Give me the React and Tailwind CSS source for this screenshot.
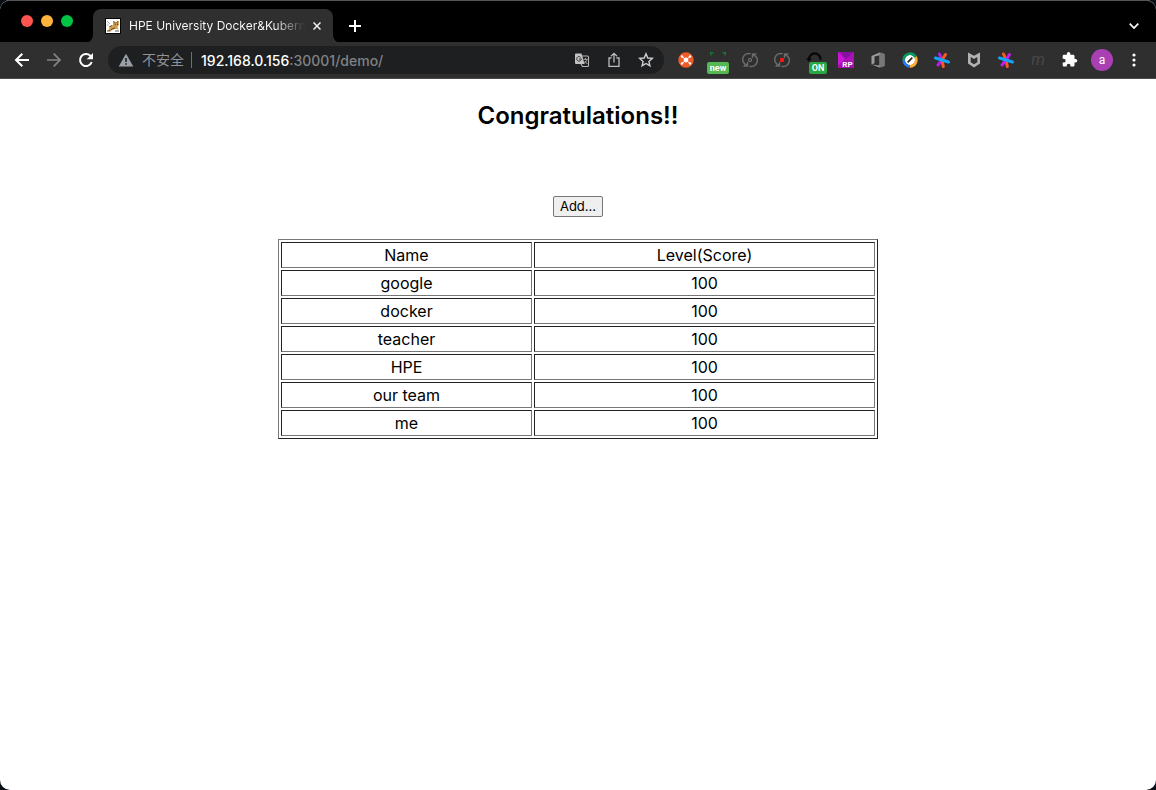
import React from "react";

const rows = [
  ["google", 100],
  ["docker", 100],
  ["teacher", 100],
  ["HPE", 100],
  ["our team", 100],
  ["me", 100],
];

const slot = "flex h-8 w-8 shrink-0 items-center justify-center";

function ToolButton({ label, children }) {
  return (
    <button type="button" aria-label={label} className={slot}>
      {children}
    </button>
  );
}

function TabCurve({ flip }) {
  return (
    <svg width="8" height="8" viewBox="0 0 8 8" className={flip ? "-scale-x-100" : ""} aria-hidden="true">
      <path d="M8 0v8H0a8 8 0 0 0 8-8z" fill="#2f2f2f" />
    </svg>
  );
}

function TomcatIcon() {
  return (
    <svg width="16" height="16" viewBox="0 0 16 16" className="shrink-0" aria-hidden="true">
      <rect width="16" height="16" fill="#050505" />
      <rect x="1" y="1" width="14" height="14" fill="#fff" />
      <path d="M2 3l3 3M1.500 7h2" stroke="#9a9a9a" strokeWidth=".8" />
      <path d="M8 3l1.300 1h2.500L13.500 2.500l.5 4.300-1.500 2 1 3-2-1-3 .5L6 13l-4-.2 2-1.600 1-2.700L8 7z" fill="#cf9d4c" />
      <path d="M4 9l3-1.500M6 11.500l4-1.500M2 13h3.500M10 13h4M8.500 3l1.500 2M13 3l-1 2" stroke="#54340d" strokeWidth=".8" />
      <path d="M9.800 6.200h.8M12 6.200h.8" stroke="#111" strokeWidth="1" />
    </svg>
  );
}

function SyncIcon({ recording }) {
  return (
    <svg width="16" height="16" viewBox="0 0 16 16" fill="none" aria-hidden="true">
      <g stroke="#6a6a6a" strokeWidth="1.500">
        <path d="M5 13.300A6 6 0 0 1 8.500 1.700M1.500 13.900h4V10" />
        <path d="M11 2.700A6 6 0 0 1 7.500 14.300M14.500 2.100h-4V6" />
      </g>
      {recording ? (
        <circle cx="8" cy="8" r="2.200" fill="#ff1717" />
      ) : (
        <circle cx="8" cy="8" r="1.500" stroke="#777" strokeWidth="1.100" />
      )}
    </svg>
  );
}

function PinwheelIcon({ swap }) {
  const a = swap ? "#ff5722" : "#b81ee8";
  const b = swap ? "#c31eea" : "#ff5722";
  return (
    <svg width="18" height="18" viewBox="0 0 18 18" strokeWidth="3" strokeLinecap="round" fill="none" aria-hidden="true">
      <path d="M6.500 3L9 9" stroke={a} />
      <path d="M9 9l1.300 6.500" stroke={a} />
      <path d="M12.500 3.500L9 9" stroke={b} />
      <path d="M9 9l-4 5" stroke={b} />
      <path d="M2.500 7l13 4" stroke="#13a5f5" />
    </svg>
  );
}

function TabStrip() {
  return (
    <div className="flex h-[42px] items-end bg-black">
      <div className="flex w-[85px] shrink-0 gap-2 self-start pt-3.5 pl-[21px]">
        <button type="button" aria-label="Close window" className="h-3 w-3 rounded-full bg-[#ff5450]" />
        <button type="button" aria-label="Minimize window" className="h-3 w-3 rounded-full bg-[#ffb33c]" />
        <button type="button" aria-label="Zoom window" className="h-3 w-3 rounded-full bg-[#00c445]" />
      </div>
      <TabCurve />
      <div className="flex h-[34px] w-60 items-center rounded-t-lg bg-[#2f2f2f] pr-2 pl-3">
        <TomcatIcon />
        <span className="ml-2 w-[176px] shrink-0 bg-linear-to-r from-white from-82% to-transparent bg-clip-text font-['Inter',sans-serif] text-[12px] leading-4 whitespace-nowrap text-transparent">
          HPE University Docker&amp;Kubern
        </span>
        <button type="button" aria-label="Close tab" className="ml-1 flex h-4 w-4 items-center justify-center">
          <svg width="8" height="8" viewBox="0 0 8 8" stroke="#f1f1f1" strokeWidth="1.500" aria-hidden="true">
            <path d="M.5.500l7 7M7.500.500l-7 7" />
          </svg>
        </button>
      </div>
      <TabCurve flip />
      <button type="button" aria-label="New tab" className="flex h-[34px] w-7 items-center justify-center">
        <svg width="12" height="12" viewBox="0 0 12 12" stroke="#fff" strokeWidth="2" aria-hidden="true">
          <path d="M6 0v12M0 6h12" />
        </svg>
      </button>
      <button type="button" aria-label="Search tabs" className="mr-1.5 ml-auto flex h-[34px] w-8 items-center justify-center">
        <svg width="10" height="6" viewBox="0 0 10 6" fill="none" stroke="#fff" strokeWidth="1.700" aria-hidden="true">
          <path d="M.7.700L5 5 9.300.700" />
        </svg>
      </button>
    </div>
  );
}

function AddressBar() {
  return (
    <div className="ml-1.5 flex h-7 min-w-0 flex-1 items-center rounded-full bg-[#1e1f21] pr-0.5 pl-2.5 text-[14px] text-[#8f9397]">
      <svg width="16" height="14" viewBox="0 0 16 14" className="shrink-0" aria-hidden="true">
        <path d="M8 .7l7.300 12.800H.7z" fill="#9aa0a6" />
        <path d="M7.200 5h1.600v4H7.200zM7.200 10.200h1.600v1.600H7.200z" fill="#1e1f21" />
      </svg>
      <span className="ml-2 shrink-0">不安全</span>
      <span className="mx-[7px] h-4 w-px shrink-0 bg-[#6d7073]" />
      <a href="#demo" className="ml-0.5 min-w-0 flex-1 truncate font-['Inter',sans-serif] text-[14px] font-medium text-[#808284]">
        <span className="text-white">192.168.0.156</span>:30001/demo/
      </a>
      <ToolButton label="Translate this page">
        <svg width="16" height="16" viewBox="0 0 16 16" fill="none" aria-hidden="true">
          <path d="M6 4h7.500a1 1 0 0 1 1 1v8.500a1 1 0 0 1-1 1H8.500L7 12" stroke="#b5b5b5" strokeWidth="1.100" />
          <path d="M2 1.500h5.500L10.500 12H2a1 1 0 0 1-1-1V2.500a1 1 0 0 1 1-1z" fill="#c3c3c3" />
          <path d="M6.600 5.200A2.300 2.300 0 1 0 7.300 7H5" stroke="#333" strokeWidth="1" />
          <path d="M9.500 7.300h4M11.500 6v1.300M13 7.300c-.5 2-1.500 3-3 4M10.800 9l2.500 3" stroke="#b5b5b5" strokeWidth=".9" />
        </svg>
      </ToolButton>
      <ToolButton label="Share this page">
        <svg width="14" height="16" viewBox="0 0 14 16" fill="none" stroke="#bcbcbc" strokeWidth="1.300" aria-hidden="true">
          <path d="M4.500 6H2v8.300h10V6H9.500M7 10.500V1.500M4 4.300l3-3 3 3" />
        </svg>
      </ToolButton>
      <ToolButton label="Bookmark this page">
        <svg width="16" height="16" viewBox="0 0 16 16" fill="none" stroke="#d0d0d0" strokeWidth="1.400" aria-hidden="true">
          <path d="M8 1.800l1.800 4.200 4.500.4-3.400 3 1 4.500L8 11.500l-3.900 2.400 1-4.500-3.400-3 4.500-.4z" />
        </svg>
      </ToolButton>
    </div>
  );
}

function Extensions() {
  return (
    <div className="ml-1.5 flex shrink-0 items-center">
      <ToolButton label="Network extension">
        <svg width="16" height="16" viewBox="0 0 16 16" aria-hidden="true">
          <circle cx="8" cy="8" r="7.700" fill="#f15a29" />
          <path d="M4 4.500l8 7M12 4.500l-8 7" stroke="#fff" strokeWidth="1" />
          <circle cx="8" cy="8" r="2.400" fill="#fff" />
          <g fill="#fff"><circle cx="4" cy="4.500" r="1.200" /><circle cx="12" cy="4.500" r="1.200" /><circle cx="4" cy="11.500" r="1.200" /><circle cx="12" cy="11.500" r="1.200" /></g>
        </svg>
      </ToolButton>
      <ToolButton label="Capture extension">
        <span className="relative flex h-8 w-8 items-center justify-center">
          <svg width="16" height="16" viewBox="0 0 16 16" fill="none" stroke="#157a2d" strokeWidth="1.500" aria-hidden="true">
            <path d="M.7 3.500V.7H3.500M12.500 .7h2.800V3.500" />
          </svg>
          <span className="absolute right-[5px] bottom-0.5 left-[5px] h-3 rounded-[2px] bg-[#55b852] text-center text-[9px] leading-3 font-bold text-white">new</span>
        </span>
      </ToolButton>
      <ToolButton label="Sync"><SyncIcon /></ToolButton>
      <ToolButton label="Sync recording"><SyncIcon recording /></ToolButton>
      <ToolButton label="Toggle extension">
        <span className="relative flex h-8 w-8 items-center justify-center">
          <svg width="16" height="16" viewBox="0 0 16 16" fill="none" aria-hidden="true">
            <path d="M3 8A5.800 5.800 0 1 1 14.500 8" stroke="#080808" strokeWidth="2.200" />
            <path d="M0 6.500h6L3 10z" fill="#080808" />
          </svg>
          <span className="absolute right-[3px] bottom-0.5 left-[11px] h-3 rounded-[2px] bg-[#28a745] text-center text-[9px] leading-3 font-bold text-white">ON</span>
        </span>
      </ToolButton>
      <ToolButton label="Axure RP">
        <svg width="16" height="16" viewBox="0 0 16 16" aria-hidden="true">
          <path d="M0 0h16v16H0z" fill="#a60dad" />
          <path d="M0 0l7 7-7 7z" fill="#c917d8" />
          <path d="M3 0h13L8 7z" fill="#8611a0" />
          <path d="M16 0v16L8 7z" fill="#ab12b6" />
          <text x="9.500" y="14.500" textAnchor="middle" fontSize="8" fontWeight="700" fill="#fff">RP</text>
        </svg>
      </ToolButton>
      <ToolButton label="Office">
        <svg width="16" height="16" viewBox="0 0 16 16" aria-hidden="true">
          <path d="M1.500 4L9.500.5l5 1.500v12l-5 1.500-8-3 8 1V3.200L4.500 4.500v6.700l-3 1.300z" fill="#9b9b9b" />
          <path d="M9.500.5l5 1.500v12l-5 1.500z" fill="#777" />
        </svg>
      </ToolButton>
      <ToolButton label="Browser assistant">
        <svg width="16" height="16" viewBox="0 0 16 16" aria-hidden="true">
          <circle cx="8" cy="8" r="5.200" fill="#fff" />
          <g fill="none" strokeWidth="2.700">
            <path d="M1.700 8A6.300 6.300 0 0 1 13.500 5" stroke="#079b61" />
            <path d="M13.500 5A6.300 6.300 0 0 1 8 14.300" stroke="#ffad2f" />
            <path d="M8 14.300A6.300 6.300 0 0 1 1.700 8" stroke="#2878e8" />
          </g>
          <path d="M5.700 10.300l4.600-4.600" stroke="#222" strokeWidth="1.700" />
        </svg>
      </ToolButton>
      <ToolButton label="Color pinwheel">
        <svg width="18" height="18" viewBox="0 0 18 18" strokeWidth="3" strokeLinecap="round" fill="none" aria-hidden="true">
          <path d="M6.500 3L9 9M9 9l-4 5" stroke="#b81ee8" />
          <path d="M12.500 3.500L9 9M9 9l1.300 6.500" stroke="#ff5722" />
          <path d="M2.500 7l13 4" stroke="#13a5f5" />
        </svg>
      </ToolButton>
      <ToolButton label="McAfee">
        <svg width="14" height="16" viewBox="0 0 14 16" aria-hidden="true">
          <path d="M1 .5l6 3.300L13 .5v11l-6 4-6-4zM3.700 5v5.200L7 12.300l3.300-2.100V5L7 7z" fill="#b2b2b2" fillRule="evenodd" />
        </svg>
      </ToolButton>
      <ToolButton label="Second pinwheel"><PinwheelIcon swap /></ToolButton>
      <ToolButton label="Inactive extension">
        <span className="text-[16px] leading-4 text-[#484848] italic">m</span>
      </ToolButton>
      <ToolButton label="Extensions">
        <svg width="16" height="16" viewBox="1 1 23 23" fill="#fff" aria-hidden="true">
          <path d="M20.500 11H19V7c0-1.100-.9-2-2-2h-4V3.500a2.500 2.500 0 0 0-5 0V5H4c-1.100 0-2 .9-2 2v3.800h1.500a2.700 2.700 0 0 1 0 5.400H2V20c0 1.100.9 2 2 2h3.800v-1.500a2.700 2.700 0 0 1 5.400 0V22H17c1.100 0 2-.9 2-2v-4h1.500a2.500 2.500 0 0 0 0-5z" />
        </svg>
      </ToolButton>
      <ToolButton label="Profile">
        <span className="flex h-[22px] w-[22px] items-center justify-center rounded-full bg-[#aa3fb3] text-[12px] leading-4 text-white">a</span>
      </ToolButton>
      <ToolButton label="Browser menu">
        <svg width="4" height="14" viewBox="0 0 4 14" fill="#fff" aria-hidden="true">
          <circle cx="2" cy="2" r="1.600" /><circle cx="2" cy="7" r="1.600" /><circle cx="2" cy="12" r="1.600" />
        </svg>
      </ToolButton>
    </div>
  );
}

function Toolbar() {
  return (
    <div className="flex h-[37px] items-center border-b border-[#4b4b4b] bg-[#2f2f2f] px-1.5">
      <ToolButton label="Back">
        <svg width="16" height="16" viewBox="0 0 16 16" fill="none" stroke="#fff" strokeWidth="2" aria-hidden="true">
          <path d="M15 8H2M8.300 1.700L2 8l6.300 6.300" />
        </svg>
      </ToolButton>
      <ToolButton label="Forward">
        <svg width="16" height="16" viewBox="0 0 16 16" fill="none" stroke="#858585" strokeWidth="1.700" aria-hidden="true">
          <path d="M1 8h13M7.700 1.700L14 8l-6.300 6.300" />
        </svg>
      </ToolButton>
      <ToolButton label="Reload">
        <svg width="16" height="16" viewBox="0 0 16 16" aria-hidden="true">
          <path d="M13.700 10A6 6 0 1 1 12.300 3.800L14 5.500" fill="none" stroke="#fff" strokeWidth="2" />
          <path d="M15 1v6.300H8.700z" fill="#fff" />
        </svg>
      </ToolButton>
      <AddressBar />
      <Extensions />
    </div>
  );
}

export default function App() {
  return (
    <div className="min-h-screen bg-[#0b1018] font-['Roboto','Noto_Sans_CJK_SC',sans-serif]">
      <div className="flex min-h-screen flex-col overflow-hidden rounded-[10px] bg-white">
        <header className="rounded-t-[10px] bg-black">
          <div className="-mb-px overflow-hidden rounded-t-[10px] border-t border-[#555]">
            <TabStrip />
          </div>
          <Toolbar />
        </header>
        <main className="flex flex-1 flex-col items-center px-2 pt-[21px] font-['Inter','Noto_Sans_CJK_SC',sans-serif] text-black">
          <h1 className="text-[24px] leading-8 font-semibold">Congratulations!!</h1>
          <button type="button" className="mt-16 rounded-[2px] border border-[#767676] bg-[#efefef] px-1.5 pt-px pb-0.5 text-[13px] leading-4">
            Add...
          </button>
          <table className="mt-[22px] w-full max-w-[600px] table-fixed border-separate border-spacing-[2px] border border-t-[#777] border-r-[#222] border-b-[#222] border-l-[#777] text-center text-[16px] leading-[22px]">
            <colgroup>
              <col className="w-[251px]" />
              <col />
            </colgroup>
            <thead>
              <tr>
                {["Name", "Level(Score)"].map((heading) => (
                  <th key={heading} scope="col" className="border border-t-[#222] border-r-[#777] border-b-[#777] border-l-[#222] p-px font-normal">
                    {heading}
                  </th>
                ))}
              </tr>
            </thead>
            <tbody>
              {rows.map(([name, score]) => (
                <tr key={name}>
                  <td className="border border-t-[#222] border-r-[#777] border-b-[#777] border-l-[#222] p-px">{name}</td>
                  <td className="border border-t-[#222] border-r-[#777] border-b-[#777] border-l-[#222] p-px">{score}</td>
                </tr>
              ))}
            </tbody>
          </table>
        </main>
      </div>
    </div>
  );
}
